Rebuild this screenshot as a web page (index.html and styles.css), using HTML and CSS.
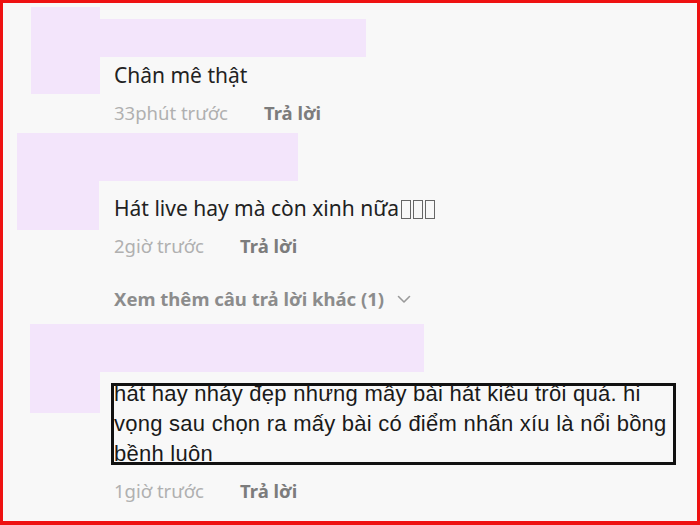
FILE: index.html
```html
<!DOCTYPE html>
<html lang="vi">
<head>
<meta charset="utf-8">
<title>Bình luận</title>
<link rel="stylesheet" href="styles.css">
</head>
<body>
<div class="frame">
  <div class="comment c1">
    <div class="avatar"></div>
    <div class="body">
      <div class="name-bar"></div>
      <p class="text">Chân mê thật</p>
      <div class="meta"><span class="time">33phút trước</span><span class="reply">Trả lời</span></div>
    </div>
  </div>

  <div class="comment c2">
    <div class="avatar"></div>
    <div class="body">
      <div class="name-bar"></div>
      <p class="text">Hát live hay mà còn xinh nữa<span class="tofu"></span><span class="tofu"></span><span class="tofu"></span></p>
      <div class="meta"><span class="time">2giờ trước</span><span class="reply">Trả lời</span></div>
      <div class="more">Xem thêm câu trả lời khác (1)
        <svg class="chev" width="14" height="9" viewBox="0 0 14 9"><polyline points="1.5,1.5 7,7 12.5,1.5" fill="none" stroke="#9a9a9a" stroke-width="1.6" stroke-linecap="round" stroke-linejoin="round"/></svg>
      </div>
    </div>
  </div>

  <div class="comment c3">
    <div class="avatar"></div>
    <div class="body">
      <div class="name-bar"></div>
      <div class="boxed">
        <p class="boxed-text">hát hay nháy đẹp nhưng mấy bài hát kiểu trôi quá. hi<br>vọng sau chọn ra mấy bài có điểm nhấn xíu là nổi bồng<br>bềnh luôn</p>
      </div>
      <div class="meta"><span class="time">1giờ trước</span><span class="reply">Trả lời</span></div>
    </div>
  </div>
</div>
</body>
</html>
```

FILE: styles.css
```css
* { box-sizing: border-box; }
html, body { margin: 0; padding: 0; }
body { background: #f8f8f8; }

.frame {
  width: 700px;
  height: 525px;
  border-style: solid;
  border-color: #ee1111;
  border-width: 3px 3px 4px 3px;
  background: #f8f8f8;
  overflow: hidden;
  font-family: "Noto Sans", "Liberation Sans", sans-serif;
}

.comment {
  display: flex;
  align-items: flex-start;
}

.avatar { background: #f3e5fb; flex: none; }
.name-bar { background: #f3e5fb; }
.body { display: flex; flex-direction: column; align-items: flex-start; }

.text {
  margin: 0;
  font-size: 21px;
  line-height: 28px;
  color: #222;
  white-space: nowrap;
}

.meta {
  display: flex;
  gap: 36px;
  font-size: 18.5px;
  line-height: 24px;
  white-space: nowrap;
}
.time { color: #b0b0b0; }
.reply { color: #7c7c7c; font-weight: 700; }

.tofu {
  display: inline-block;
  width: 10px;
  height: 19px;
  border: 1px solid #666;
  margin-left: 2px;
  vertical-align: -3px;
}

.more {
  display: flex;
  align-items: center;
  gap: 13px;
  font-size: 18.5px;
  line-height: 24px;
  font-weight: 700;
  color: #8c8c8c;
  white-space: nowrap;
}

/* comment 1 */
.c1 { margin-top: 4px; padding-left: 28px; }
.c1 .avatar { width: 69px; height: 87px; }
.c1 .name-bar { width: 266px; height: 38px; margin-top: 12px; }
.c1 .text { margin-top: 4px; padding-left: 14px; }
.c1 .meta { margin-top: 12px; padding-left: 14px; }

/* comment 2 */
.c2 { margin-top: 8px; padding-left: 14px; }
.c2 .avatar { width: 82px; height: 97px; }
.c2 .name-bar { width: 199px; height: 48px; }
.c2 .text { margin-top: 13px; padding-left: 15px; }
.c2 .meta { margin-top: 12px; padding-left: 15px; }
.c2 .more { margin-top: 29px; padding-left: 15px; }

/* comment 3 */
.c3 { margin-top: 13px; padding-left: 27px; }
.c3 .avatar { width: 70px; height: 89px; }
.c3 .name-bar { width: 324px; height: 48px; }
.c3 .meta { margin-top: 14px; padding-left: 14px; }

.boxed {
  margin-top: 11px;
  margin-left: 11px;
  width: 565px;
  height: 82px;
  border: 3px solid #111;
}
.boxed-text {
  margin: -7px 0 0 0;
  font-family: "Liberation Sans", Arial, sans-serif;
  font-size: 22px;
  letter-spacing: 0.25px;
  line-height: 30px;
  color: #1a1a1a;
  white-space: nowrap;
}
```
